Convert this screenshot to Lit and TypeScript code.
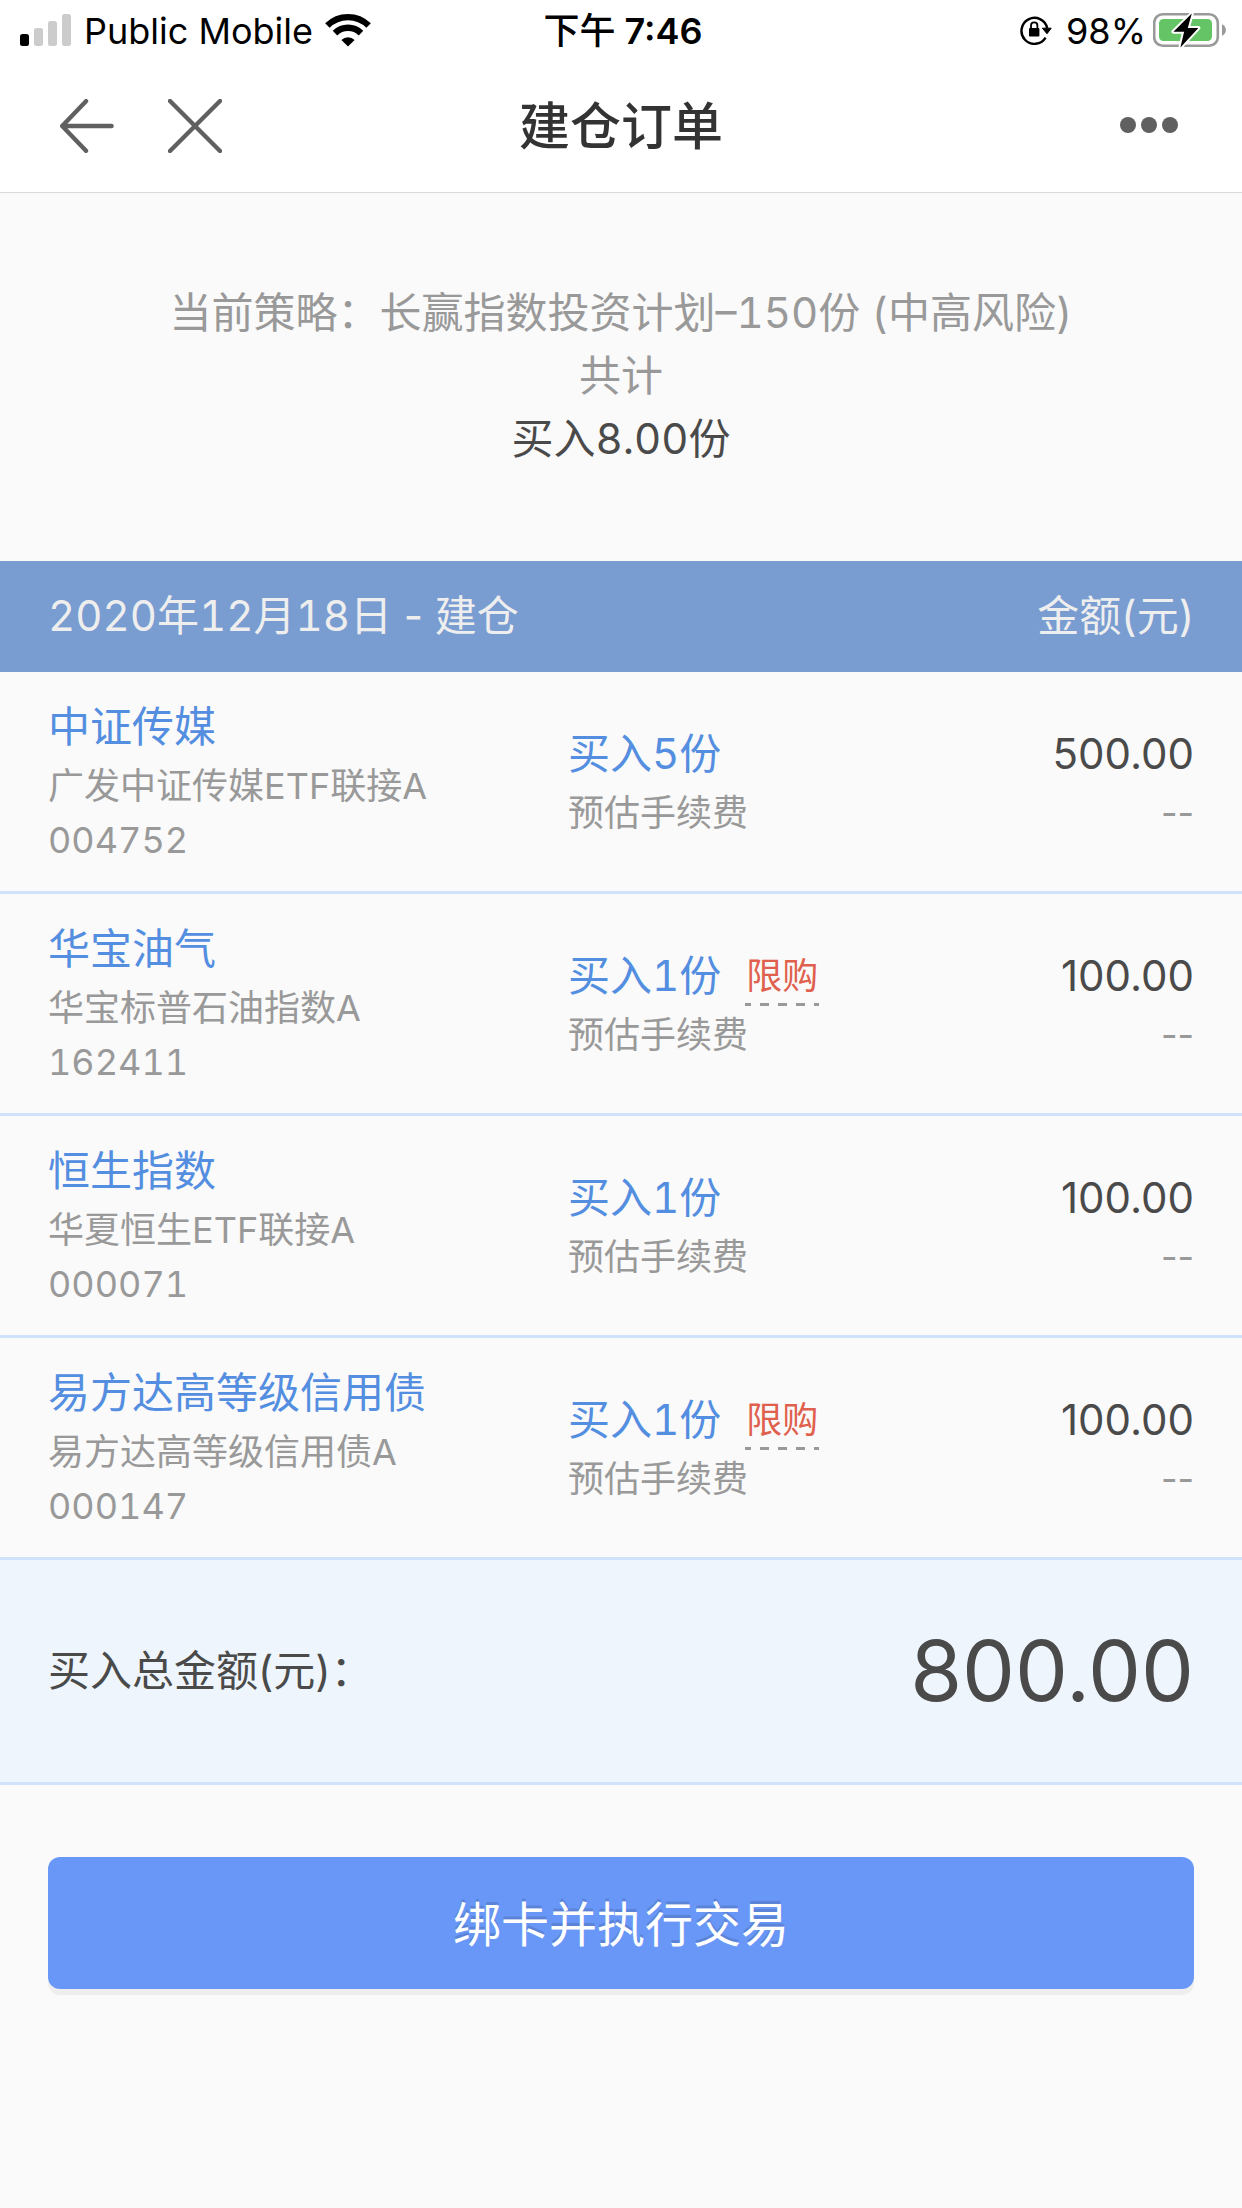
import { LitElement, html, css, svg, nothing } from "lit";
import { customElement, property, state } from "lit/decorators.js";

interface Holding {
  name: string;
  fund: string;
  code: string;
  shares: number;
  limited: boolean;
  amount: number;
}

const money = (value: number): string => value.toFixed(2);

@customElement("status-bar")
export class StatusBar extends LitElement {
  static styles = css`
    :host {
      display: grid;
      grid-template-columns: 1fr auto 1fr;
      align-items: center;
      height: 60px;
      padding: 0 16px 0 20px;
      color: #000;
      font-size: 36px;
      line-height: 44px;
    }
    .group {
      display: flex;
      align-items: center;
    }
    .network {
      gap: 12px;
    }
    .power {
      justify-content: flex-end;
      gap: 7px;
    }
    .label {
      padding-top: 2px;
    }
    .time {
      font-weight: 600;
    }
    .meridiem {
      font-weight: 500;
    }
    .lock {
      margin-right: 7px;
    }
    svg {
      display: block;
      flex: none;
    }
  `;

  render() {
    return html`
      <div class="group network">
        <svg width="52" height="34" viewBox="0 0 52 34" aria-hidden="true">
          <rect x="0" y="21" width="9" height="12" rx="2.5" fill="#000" />
          <rect x="14" y="15" width="9" height="18" rx="2.5" fill="#ccc" />
          <rect x="28" y="8" width="9" height="25" rx="2.5" fill="#ccc" />
          <rect x="42" y="1" width="9" height="32" rx="2.5" fill="#ccc" />
        </svg>
        <span class="label">Public Mobile</span>
        <svg width="46" height="34" viewBox="0 0 46 34" aria-hidden="true">
          <g fill="none" stroke="#000" stroke-width="6.4">
            <path d="M2.4 12.6a29.2 29.2 0 0 1 41.2 0" />
            <path d="M10 20.1a18.5 18.5 0 0 1 26 0" />
          </g>
          <path d="M23 33.6l-6.6-6.7a9.6 9.6 0 0 1 13.2 0z" fill="#000" />
        </svg>
      </div>
      <div class="label time"><span class="meridiem">下午</span> 7:46</div>
      <div class="group power">
        <svg class="lock" width="32" height="30" viewBox="0 0 32 30" aria-hidden="true">
          <path
            d="M25.6 22.6a13 13 0 1 1 1.6-9.4"
            fill="none"
            stroke="#000"
            stroke-width="2.4"
          />
          <path d="M22.4 13.2h8.800l-4.200 5.600z" fill="#000" stroke="#000" stroke-linejoin="round" />
          <rect x="9" y="13" width="10.4" height="8.6" rx="1" fill="#000" />
          <path
            d="M11 13.6v-3a3.2 3.2 0 0 1 6.4 0v3"
            fill="none"
            stroke="#000"
            stroke-width="1.8"
          />
        </svg>
        <span class="label">98%</span>
        <svg width="73" height="36" viewBox="0 0 73 36" aria-hidden="true">
          <rect x="1.2" y="2.2" width="63.6" height="31.6" rx="8.6" fill="none" stroke="#999" stroke-width="2.6" />
          <rect x="6" y="7" width="53" height="22" rx="4.5" fill="#65c466" />
          <path d="M69 12.2c5.2 2.2 5.2 9.4 0 11.6z" fill="#999" />
          <path
            d="M38.8 1.6L20.4 19.7h10.7L27.4 35.4 45.4 15.9H34.8z"
            fill="#000"
            stroke="#fff"
            stroke-width="4"
            paint-order="stroke"
            stroke-linejoin="round"
          />
        </svg>
      </div>
    `;
  }
}

@customElement("nav-bar")
export class NavBar extends LitElement {
  static styles = css`
    :host {
      display: grid;
      grid-template-columns: 1fr auto 1fr;
      align-items: center;
      height: 132px;
      padding: 0 60px;
      border-bottom: 1px solid #d9d9d9;
    }
    .title {
      margin: 0;
      padding-top: 2px;
      color: #333;
      font-size: 51px;
      font-weight: 500;
      line-height: 72px;
    }
    .actions {
      display: flex;
      gap: 54px;
    }
    .actions-end {
      justify-content: flex-end;
    }
    .icon-button {
      display: block;
      padding: 0;
      border: 0;
      background: none;
      cursor: pointer;
    }
    svg {
      display: block;
    }
    .line {
      fill: none;
      stroke: #606060;
      stroke-width: 4.4;
      stroke-linecap: round;
      stroke-linejoin: round;
    }
    .dot {
      fill: #606060;
    }
  `;

  @property() heading = "";

  render() {
    return html`
      <div class="actions">
        <button class="icon-button" type="button" aria-label="返回">
          <svg width="54" height="54" viewBox="0 0 54 54">
            <path class="line" d="M26 2.2L2.2 27 26 51.8M2.2 27H51.6" />
          </svg>
        </button>
        <button class="icon-button" type="button" aria-label="关闭">
          <svg width="54" height="54" viewBox="0 0 54 54">
            <path class="line" d="M2 2L52 52M52 2L2 52" />
          </svg>
        </button>
      </div>
      <h1 class="title">${this.heading}</h1>
      <div class="actions actions-end">
        <button class="icon-button" type="button" aria-label="更多">
          <svg width="62" height="54" viewBox="0 0 62 54">
            ${[8, 29, 50].map((x) => svg`<circle class="dot" cx=${x} cy="26" r="8" />`)}
          </svg>
        </button>
      </div>
    `;
  }
}

@customElement("order-table")
export class OrderTable extends LitElement {
  static styles = css`
    :host {
      display: block;
    }
    .orders {
      width: 100%;
      table-layout: fixed;
      border-collapse: separate;
      border-spacing: 0;
      color: #4a4a4a;
      font-size: 42px;
      line-height: 60px;
    }
    .col-name {
      width: 45%;
    }
    .col-amount {
      width: 25%;
    }
    th,
    td {
      padding: 0;
      font-weight: 400;
      text-align: left;
      vertical-align: middle;
    }
    .head th {
      height: 109px;
      padding-bottom: 2px;
      background: #799cd1;
      color: #eee;
    }
    .row th,
    .row td {
      height: 219px;
      border-bottom: 3px solid #cfe2fa;
    }
    .total th,
    .total td {
      height: 222px;
      border-bottom: 3px solid #cfe2fa;
      background: #eef5fc;
    }
    .orders .first {
      padding-left: 48px;
    }
    .orders .middle {
      padding-left: 9px;
    }
    .orders .last {
      padding-right: 48px;
      text-align: right;
    }
    .date,
    .code,
    .action {
      font-variant-numeric: tabular-nums;
    }
    .name,
    .action,
    .amount {
      margin-bottom: 2px;
    }
    .name,
    .action {
      color: #548ee0;
    }
    .action {
      display: flex;
      align-items: center;
      gap: 24px;
    }
    .note {
      color: #999;
      font-size: 36px;
      line-height: 54px;
    }
    .limit {
      height: 60px;
      padding: 0 1px;
      border: 0;
      background: linear-gradient(to right, #999 50%, transparent 50%) -3px 100% / 18px 3px
        repeat-x;
      color: #e0604e;
      font: inherit;
      font-size: 36px;
      line-height: 60px;
      cursor: pointer;
    }
    .sum {
      font-size: 84px;
      line-height: 120px;
    }
  `;

  @property() date = "";
  @property({ attribute: false }) holdings: Holding[] = [];

  private renderRow(item: Holding) {
    return html`
      <tr class="row">
        <th class="first" scope="row">
          <div class="name">${item.name}</div>
          <div class="note">${item.fund}</div>
          <div class="note code">${item.code}</div>
        </th>
        <td class="middle">
          <div class="action">
            <span>买入${item.shares}份</span>
            ${item.limited ? html`<button class="limit" type="button">限购</button>` : nothing}
          </div>
          <div class="note">预估手续费</div>
        </td>
        <td class="last">
          <div class="amount">${money(item.amount)}</div>
          <div class="note">--</div>
        </td>
      </tr>
    `;
  }

  render() {
    const total = this.holdings.reduce((sum, item) => sum + item.amount, 0);
    return html`
      <table class="orders">
        <colgroup>
          <col class="col-name" />
          <col />
          <col class="col-amount" />
        </colgroup>
        <thead>
          <tr class="head">
            <th class="first" colspan="2" scope="col"><span class="date">${this.date}</span> - 建仓</th>
            <th class="last" scope="col">金额(元)</th>
          </tr>
        </thead>
        <tbody>
          ${this.holdings.map((item) => this.renderRow(item))}
        </tbody>
        <tfoot>
          <tr class="total">
            <th class="first" scope="row">买入总金额(元)：</th>
            <td class="last sum" colspan="2">${money(total)}</td>
          </tr>
        </tfoot>
      </table>
    `;
  }
}

@customElement("app-root")
export class AppRoot extends LitElement {
  static styles = css`
    :host {
      display: block;
      min-height: 100vh;
      background: #fafafa;
      font-family: Inter, "Noto Sans CJK SC", sans-serif;
    }
    .top {
      background: #fff;
    }
    .summary {
      padding: 88px 48px 91px;
      color: #999;
      font-size: 42px;
      font-variant-numeric: tabular-nums;
      line-height: 63px;
      text-align: center;
    }
    .line {
      margin: 0;
    }
    .strong {
      color: #4a4a4a;
    }
    .footer {
      padding: 72px 48px;
    }
    .submit {
      display: block;
      width: 100%;
      height: 132px;
      padding: 4px 0 0;
      border: 0;
      border-radius: 12px;
      background: #6997f7;
      box-shadow: 0 6px 0 #eee;
      color: #fff;
      font: inherit;
      font-size: 48px;
      line-height: 72px;
      text-shadow: 0 -3px 0 rgba(0, 0, 0, 0.12);
      cursor: pointer;
    }
  `;

  @state() private holdings: Holding[] = [
    { name: "中证传媒", fund: "广发中证传媒ETF联接A", code: "004752", shares: 5, limited: false, amount: 500 },
    { name: "华宝油气", fund: "华宝标普石油指数A", code: "162411", shares: 1, limited: true, amount: 100 },
    { name: "恒生指数", fund: "华夏恒生ETF联接A", code: "000071", shares: 1, limited: false, amount: 100 },
    { name: "易方达高等级信用债", fund: "易方达高等级信用债A", code: "000147", shares: 1, limited: true, amount: 100 },
  ];

  render() {
    const shares = this.holdings.reduce((sum, item) => sum + item.shares, 0);
    return html`
      <header class="top">
        <status-bar></status-bar>
        <nav-bar heading="建仓订单"></nav-bar>
      </header>
      <main>
        <section class="summary">
          <p class="line">当前策略：长赢指数投资计划–150份 (中高风险)</p>
          <p class="line">共计</p>
          <p class="line strong">买入${money(shares)}份</p>
        </section>
        <order-table date="2020年12月18日" .holdings=${this.holdings}></order-table>
        <div class="footer">
          <button class="submit" type="button">绑卡并执行交易</button>
        </div>
      </main>
    `;
  }
}
